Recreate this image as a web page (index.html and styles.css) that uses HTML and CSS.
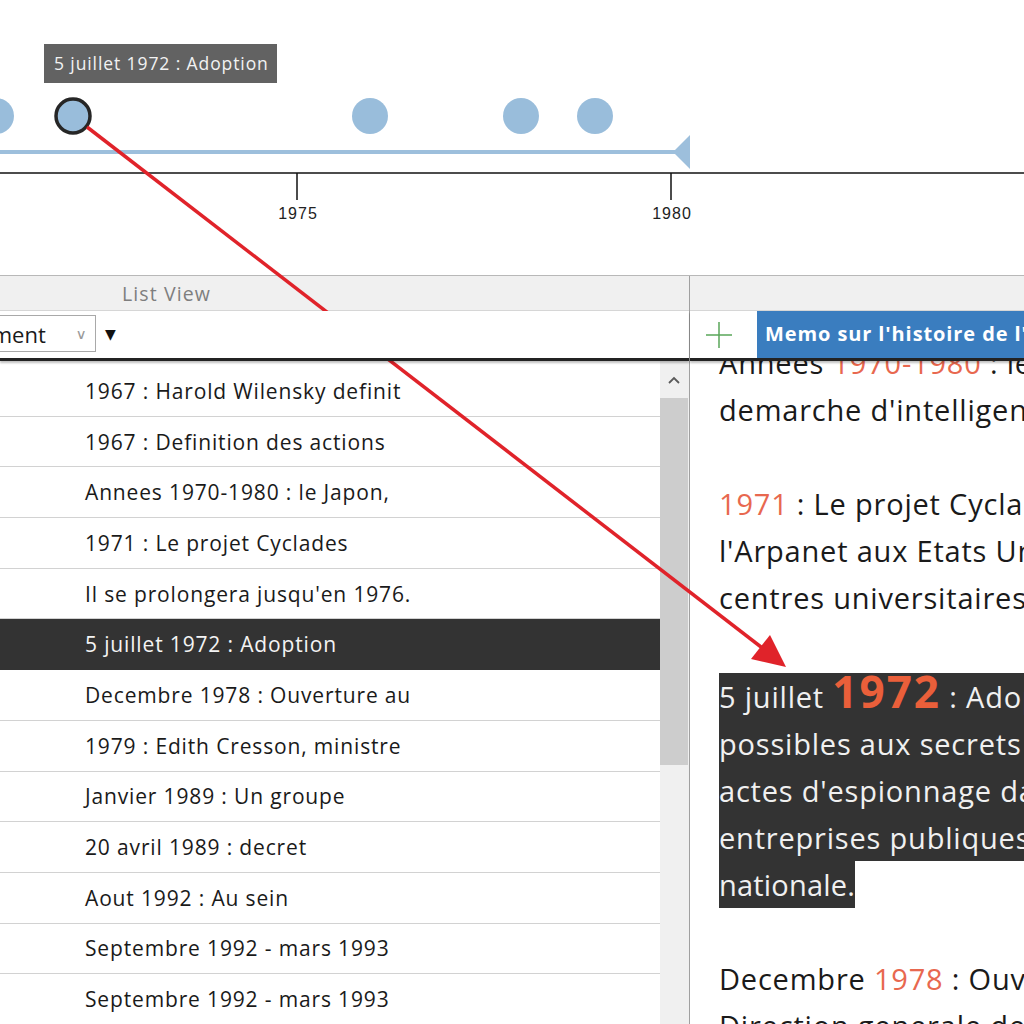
FILE: index.html
```
<!DOCTYPE html>
<html lang="fr">
<head>
<meta charset="utf-8">
<title>Timeline - List View</title>
<link rel="stylesheet" href="styles.css">
</head>
<body>
<div class="page">
  <section class="timeline">
    <svg class="chart" width="1024" height="275" viewBox="0 0 1024 275">
      <circle cx="-4" cy="116" r="18" fill="#99bddb"/>
      <circle cx="370" cy="116" r="18" fill="#99bddb"/>
      <circle cx="521" cy="116" r="18" fill="#99bddb"/>
      <circle cx="595" cy="116" r="18" fill="#99bddb"/>
      <circle cx="73" cy="116" r="17" fill="#99bddb" stroke="#262626" stroke-width="3.5"/>
      <line x1="0" y1="152" x2="676" y2="152" stroke="#9dbfdc" stroke-width="4"/>
      <polygon points="673,152 690,135 690,169" fill="#9dbfdc"/>
      <line x1="0" y1="173" x2="1024" y2="173" stroke="#111" stroke-width="1.5"/>
      <line x1="297" y1="173" x2="297" y2="200" stroke="#111" stroke-width="1.5"/>
      <line x1="671" y1="173" x2="671" y2="200" stroke="#111" stroke-width="1.5"/>
      <text x="298" y="219" class="tick">1975</text>
      <text x="672" y="219" class="tick">1980</text>
    </svg>
    <div class="tooltip">5 juillet 1972 : Adoption</div>
  </section>

  <section class="main">
    <div class="left">
      <div class="panel-head"><span class="panel-title">List View</span></div>
      <div class="toolbar">
        <div class="select"><span class="select-text">Evenement</span><span class="chev">&#8744;</span></div>
        <span class="sort">&#9660;</span>
      </div>
      <div class="list-wrap">
        <ul class="list">
          <li class="row">1967 : Harold Wilensky definit</li>
          <li class="row">1967 : Definition des actions</li>
          <li class="row">Annees 1970-1980 : le Japon,</li>
          <li class="row">1971 : Le projet Cyclades</li>
          <li class="row">Il se prolongera jusqu'en 1976.</li>
          <li class="row selected">5 juillet 1972 : Adoption</li>
          <li class="row">Decembre 1978 : Ouverture au</li>
          <li class="row">1979 : Edith Cresson, ministre</li>
          <li class="row">Janvier 1989 : Un groupe</li>
          <li class="row">20 avril 1989 : decret</li>
          <li class="row">Aout 1992 : Au sein</li>
          <li class="row">Septembre 1992 - mars 1993</li>
          <li class="row">Septembre 1992 - mars 1993</li>
        </ul>
        <div class="scrollbar">
          <div class="scroll-up">
            <svg width="14" height="10" viewBox="0 0 14 10"><polyline points="2,8 7,3 12,8" fill="none" stroke="#5a5a5a" stroke-width="1.8"/></svg>
          </div>
          <div class="thumb"></div>
        </div>
      </div>
    </div>

    <div class="right">
      <div class="panel-head"></div>
      <div class="toolbar">
        <div class="add-btn">
          <svg width="30" height="30" viewBox="0 0 30 30"><path d="M15 2 V28 M2 15 H28" stroke="#5aa65a" stroke-width="1.5" fill="none"/></svg>
        </div>
        <div class="tab">Memo sur l'histoire de l'intelligence economique</div>
      </div>
      <div class="content">
        <div class="doc">
          <p class="para">Annees <span class="yr">1970-1980</span> : le Japon, les Etats-Unis et l'Europe adoptent une<br>demarche d'intelligence economique.</p>
          <p class="para"><span class="yr">1971</span> : Le projet Cyclades, reseau equivalent de<br>l'Arpanet aux Etats Unis, interconnecte des<br>centres universitaires et de recherche.</p>
          <div class="para hl">
            <div class="hl-block"><span class="hl-first">5 juillet <span class="big">1972</span> : Adoption d'une instruction relative aux atteintes</span><br>possibles aux secrets de defense et a la prevention des<br>actes d'espionnage dans les administrations et les<br>entreprises publiques interessant la defense</div><span class="hl-last">nationale.</span>
          </div>
          <p class="para">Decembre <span class="yr">1978</span> : Ouverture au public de la<br>Direction generale des telecommunications.</p>
        </div>
      </div>
    </div>
  </section>

  <svg class="annot" width="1024" height="1024" viewBox="0 0 1024 1024">
    <line x1="87" y1="127" x2="765" y2="650" stroke="#e0232a" stroke-width="3.5"/>
    <polygon points="786,667 770,635 751,659" fill="#e0232a"/>
  </svg>
</div>
</body>
</html>
```

FILE: styles.css
```
* { box-sizing: border-box; }
html, body {
  margin: 0;
  padding: 0;
  background: #fff;
}
body {
  width: 1024px;
  height: 1024px;
  overflow: hidden;
  font-family: "Open Sans", "Noto Sans", "DejaVu Sans", sans-serif;
  color: #1e1e1e;
}
.page {
  position: relative;
  width: 1024px;
  height: 1024px;
  overflow: hidden;
}

/* timeline */
.timeline {
  position: relative;
  height: 275px;
  background: #fff;
}
.chart { display: block; }
.tick {
  font-family: "Liberation Sans", Arial, sans-serif;
  font-size: 16px;
  letter-spacing: 1px;
  fill: #222;
  text-anchor: middle;
}
.tooltip {
  position: absolute;
  left: 44px;
  top: 44px;
  width: 233px;
  height: 39px;
  background: #626262;
  color: #f2f2f2;
  font-size: 17.5px;
  letter-spacing: 0.9px;
  line-height: 38px;
  padding-left: 10px;
  white-space: nowrap;
}

/* main area */
.main {
  display: flex;
  height: 749px;
  border-top: 1px solid #b8b8b8;
}
.left {
  width: 690px;
  flex: none;
  display: flex;
  flex-direction: column;
  border-right: 1px solid #a0a0a0;
}
.right {
  flex: 1;
  min-width: 0;
  display: flex;
  flex-direction: column;
}
.panel-head {
  height: 35px;
  flex: none;
  background: #f0f0f0;
  border-bottom: 1px solid #d6d6d6;
  display: flex;
  align-items: center;
}
.panel-title {
  padding-left: 122px;
  font-size: 19.5px;
  letter-spacing: 1.1px;
  color: #7e7e7e;
}
.toolbar {
  position: relative;
  z-index: 1;
  height: 50px;
  flex: none;
  display: flex;
  align-items: center;
  background: #fff;
  border-bottom: 3px solid #232323;
  box-shadow: 0 2px 2px rgba(0,0,0,0.25);
}
.select {
  width: 96px;
  height: 37px;
  display: flex;
  align-items: center;
  justify-content: flex-end;
  overflow: hidden;
  border: 1px solid #a9a9a9;
  border-left: none;
  padding-right: 9px;
  white-space: nowrap;
  margin-top: -2px;
}
.select-text {
  font-size: 22px;
  color: #1a1a1a;
  flex: none;
  margin-right: 30px;
}
.chev {
  flex: none;
  font-size: 14px;
  color: #9a9a9a;
  transform: scaleX(1.1);
}
.sort {
  margin-left: 9px;
  font-size: 14px;
  color: #111;
  margin-top: -2px;
}

/* list */
.list-wrap {
  flex: 1;
  display: flex;
  min-height: 0;
}
.list {
  flex: 1;
  list-style: none;
  margin: 0;
  padding: 5px 0 0 0;
  overflow: hidden;
}
.row {
  height: 50.7px;
  display: flex;
  align-items: center;
  padding-left: 85px;
  border-bottom: 1px solid #d2d2d2;
  font-size: 21px;
  letter-spacing: 0.85px;
  color: #1a1a1a;
  white-space: nowrap;
}
.row.selected {
  background: #333;
  color: #f4f4f4;
  border-bottom-color: #333;
}
.scrollbar {
  width: 29px;
  flex: none;
  background: #f0f0f0;
  display: flex;
  flex-direction: column;
  padding-right: 1px;
}
.scroll-up {
  height: 37px;
  display: flex;
  justify-content: center;
  align-items: center;
}
.thumb {
  height: 367px;
  background: #cdcdcd;
}

/* right panel */
.add-btn {
  width: 67px;
  height: 100%;
  display: flex;
  align-items: center;
  justify-content: center;
  flex: none;
  padding-right: 10px;
}
.tab {
  flex: 1;
  height: 100%;
  background: #3a7dbf;
  color: #fff;
  font-weight: 700;
  font-size: 20px;
  letter-spacing: 0.9px;
  display: flex;
  align-items: center;
  padding-left: 8px;
  padding-bottom: 2px;
  white-space: nowrap;
  overflow: hidden;
}
.content {
  flex: 1;
  overflow: hidden;
  padding-left: 29px;
}
.doc {
  margin-top: -22.5px;
  font-size: 29px;
  letter-spacing: 0.8px;
  line-height: 47px;
  color: #1a1a1a;
  white-space: nowrap;
}
.para {
  margin: 0 0 47px 0;
}
.yr { color: #e8684f; }
.hl {
  margin-top: 52px;
  color: #f0f0f0;
}
.hl-block {
  background: #333;
}
.hl-last {
  display: inline-block;
  background: #333;
  letter-spacing: 0.2px;
}
.big {
  font-size: 44px;
  font-weight: 700;
  letter-spacing: 2px;
  line-height: 34px;
  color: #ea5f3a;
}

/* annotation overlay */
.annot {
  position: absolute;
  left: 0;
  top: 0;
  pointer-events: none;
}
```
